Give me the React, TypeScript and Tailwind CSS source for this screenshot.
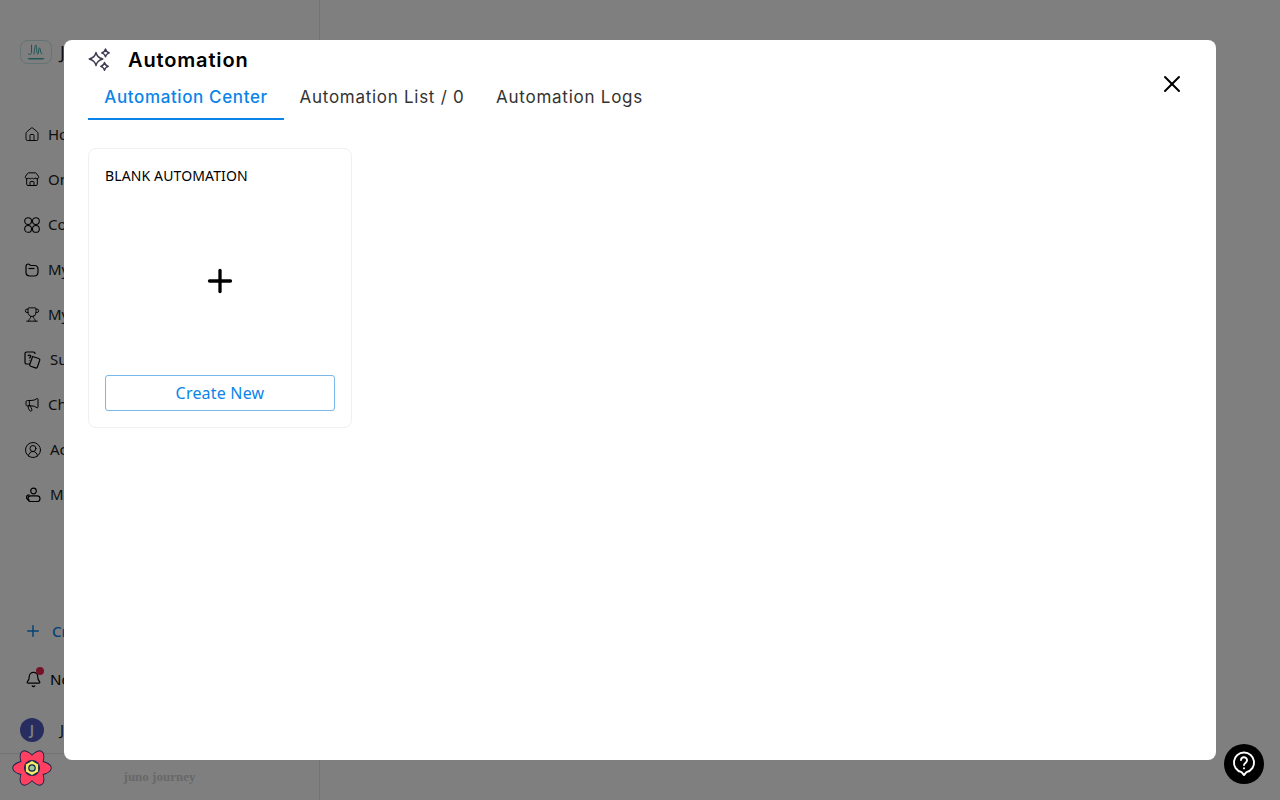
import { House, Store, Trophy, Megaphone, CircleUserRound, Plus, Bell, X } from "lucide-react";

function FourCircles() {
  return (
    <svg width="16" height="16" viewBox="0 0 16 16" fill="none" stroke="currentColor" strokeWidth="1.1">
      <circle cx="4.100" cy="4.100" r="3.400" />
      <circle cx="11.900" cy="4.100" r="3.400" />
      <circle cx="4.100" cy="11.900" r="3.400" />
      <circle cx="11.900" cy="11.900" r="3.400" />
    </svg>
  );
}

function FolderIcon() {
  return (
    <svg width="14" height="14" viewBox="0 0 14 14" fill="none" stroke="currentColor" strokeWidth="1.200" strokeLinejoin="round">
      <path d="M1 3.500C1 2 2 1 3.300 1c1.200 0 1.500 1.300 2.500 1.500h3.700C11.500 2.500 13 4 13 6.500v2.300C13 11.500 11.500 13 9.500 13H4.500C2.500 13 1 11.500 1 9.500v-6z" />
      <path d="M3.500 5.500h6" />
    </svg>
  );
}

function SurveyIcon() {
  return (
    <svg width="18" height="18" viewBox="0 0 18 18" fill="none" stroke="currentColor" strokeWidth="1.200" strokeLinejoin="round">
      <path d="M11 3V2.600A1.600 1.600 0 0 0 9.400 1H2.600A1.600 1.600 0 0 0 1 2.600v8.800A1.600 1.600 0 0 0 2.600 13H6" />
      <path d="M8.500 5.500l6.200 2a1.500 1.500 0 0 1 1 1.900l-2.300 6.600a1.500 1.500 0 0 1-1.900.9l-4.800-1.700a1.500 1.500 0 0 1-.9-1.900l2.400-6.600z" />
      <path d="M4 5c.4-1.200 2.600-1.200 2.800.2.100 1-1.300 1.200-1.300 2.300M5.500 9.500v.4" />
    </svg>
  );
}

function ManageIcon() {
  return (
    <svg width="16" height="16" viewBox="0 0 16 16" fill="none" stroke="currentColor" strokeWidth="1.200">
      <circle cx="8.500" cy="4" r="2.800" />
      <path d="M4.500 7.800C2.600 7.800 1.500 9 1.500 10.300S2.600 12.800 4.500 12.800" />
      <rect x="3" y="8.800" width="12" height="5.700" rx="2.850" />
    </svg>
  );
}

function Sparkles() {
  return (
    <svg width="24" height="24" viewBox="0 0 24 24" fill="none" stroke="#3f3d56" strokeWidth="1.400" strokeLinejoin="round">
      <path d="M8 4.500c.6 3.300 2.500 5.300 6.800 6.500C10.500 12.200 8.600 14.200 8 17.500 7.400 14.200 5.500 12.200 1.200 11 5.500 9.800 7.400 7.800 8 4.500z" />
      <path d="M17.500 1c.4 2.100 1.400 3.200 3.800 3.900-2.400.700-3.400 1.800-3.800 3.900-.4-2.100-1.400-3.200-3.800-3.900 2.400-.7 3.400-1.800 3.800-3.900z" />
      <path d="M16.500 14.500c.4 2.100 1.400 3.200 3.800 3.900-2.400.7-3.400 1.800-3.800 3.900-.4-2.100-1.400-3.200-3.800-3.900 2.400-.7 3.400-1.800 3.800-3.900z" />
    </svg>
  );
}

function Logo() {
  return (
    <svg width="32" height="24" viewBox="0 0 32 24" fill="none" strokeLinecap="round">
      <rect x="0.500" y="0.500" width="31" height="23" rx="7" stroke="#c6e4e4" />
      <path d="M11.500 5v7.500c0 2-2 2.500-3 1.500" stroke="#43adad" strokeWidth="1" />
      <path d="M14 14c.5-5 1-9 2-9s.3 9 1.700 9 .6-6 1.800-6 .5 6 2.500 6" stroke="#43adad" strokeWidth="1" />
      <rect x="8" y="18" width="16" height="1.600" rx="0.800" fill="#43adad" />
    </svg>
  );
}

function AtomLogo() {
  const angles = [0, 60, 120];
  return (
    <svg width="40" height="38" viewBox="-20 -19 40 38">
      {angles.map((a) => (
        <ellipse key={a} rx="18.800" ry="7.500" transform={`rotate(${a})`} fill="#14244a" stroke="#14244a" strokeWidth="1.800" />
      ))}
      {angles.map((a) => (
        <ellipse key={a} rx="18.800" ry="7.500" transform={`rotate(${a})`} fill="#ff4060" />
      ))}
      <circle r="8" fill="#14244a" />
      <polygon points="0,-7.500 6.500,-3.750 6.500,3.750 0,7.500 -6.500,3.750 -6.500,-3.750" fill="#f4ea6a" stroke="#14244a" strokeWidth="0.800" />
      <circle r="3.200" fill="#9ac9a0" stroke="#14244a" strokeWidth="1.200" />
    </svg>
  );
}

function HelpIcon() {
  return (
    <svg width="24" height="26" viewBox="0 0 24 26" fill="none" stroke="white" strokeWidth="1.900" strokeLinecap="round" strokeLinejoin="round">
      <path d="M12 1.500a10 10 0 0 1 2.500 19.700L12 24l-2.500-2.800A10 10 0 0 1 12 1.500z" />
      <path d="M9 9a3 3 0 0 1 6 .6c0 2.100-3 2.500-3 4.400" />
      <path d="M12 17.300v.1" />
    </svg>
  );
}

const navItems = [
  { label: "Home", icon: <House size={17} strokeWidth={1.4} />, width: "w-4" },
  { label: "Online Store", icon: <Store size={17} strokeWidth={1.5} />, width: "w-4" },
  { label: "Community", icon: <FourCircles />, width: "w-4" },
  { label: "My Programs", icon: <FolderIcon />, width: "w-4" },
  { label: "My Achievements", icon: <Trophy size={17} strokeWidth={1.4} />, width: "w-4" },
  { label: "Surveys", icon: <SurveyIcon />, width: "w-[18px]" },
  { label: "Channels", icon: <Megaphone size={17} strokeWidth={1.5} />, width: "w-4" },
  { label: "Account", icon: <CircleUserRound size={18} strokeWidth={1.3} />, width: "w-[18px]" },
  { label: "Manage", icon: <ManageIcon />, width: "w-[18px]" },
];

function Sidebar() {
  return (
    <aside className="flex h-screen w-[320px] flex-col border-r border-gray-200 bg-white font-['Noto_Sans',sans-serif] text-[15px] text-[#222]">
      <div className="flex h-[104px] items-center gap-2 pl-5">
        <Logo />
        <span className="text-lg">Juno Journey</span>
      </div>
      <nav className="flex flex-1 flex-col pt-[8px]">
        {navItems.map((item) => (
          <div key={item.label} className="flex h-[45px] items-center gap-2 pl-6 text-black">
            <span className={`flex justify-center ${item.width}`}>{item.icon}</span>
            <span className="text-[#222]">{item.label}</span>
          </div>
        ))}
      </nav>
      <div className="flex h-12 items-center gap-2.5 pl-6 font-medium text-[#0a84e8]">
        <Plus size={18} strokeWidth={2} />
        <span>Create</span>
      </div>
      <div className="flex h-12 items-center gap-2 pl-6 text-black">
        <span className="relative flex w-[18px] justify-center">
          <Bell size={17} strokeWidth={1.7} />
          <span className="absolute -right-0.5 -top-1 h-2 w-2 rounded-full bg-[#e8264f]" />
        </span>
        <span>Notifications</span>
      </div>
      <div className="flex h-[50px] items-center gap-4 pl-5 pt-[3px]">
        <span className="flex h-6 w-6 items-center justify-center rounded-full bg-[#4f5bbd] text-sm font-semibold text-white">J</span>
        <span>Juno</span>
      </div>
      <div className="flex h-[47px] items-center justify-center border-t border-gray-200 font-['Liberation_Serif',serif] text-[13px] font-bold text-[#d0d0d0]">
        juno journey
      </div>
    </aside>
  );
}

function AutomationModal() {
  return (
    <div className="fixed inset-0 flex items-center justify-center bg-black/50">
      <div className="relative h-[720px] w-[1152px] rounded-lg bg-white pl-6 font-['Inter',sans-serif]">
        <div className="flex h-10 items-center gap-4">
          <Sparkles />
          <h2 className="text-[20px] font-semibold tracking-[0.85px] text-black">Automation</h2>
        </div>
        <div className="flex text-[17px] font-medium tracking-[0.62px]">
          <button className="flex h-10 w-[196px] items-center justify-center border-b-2 border-[#0a84e8] pb-[3px] text-[#0a84e8]">
            Automation Center
          </button>
          <button className="flex h-10 w-[196px] items-center justify-center border-b-2 border-transparent pb-[3px] font-normal tracking-[0.72px] text-[#333]">
            Automation List / 0
          </button>
          <button className="flex h-10 w-[179px] items-center justify-center border-b-2 border-transparent pb-[3px] font-normal tracking-[0.75px] text-[#333]">
            Automation Logs
          </button>
        </div>
        <div className="mt-7 flex h-[280px] w-[264px] flex-col rounded-lg border border-[#f0f0f0] p-4 font-['Noto_Sans',sans-serif]">
          <div className="text-sm leading-[22px] tracking-[0.13px] text-black">BLANK AUTOMATION</div>
          <div className="flex flex-1 items-center justify-center">
            <Plus size={36} strokeWidth={2.2} className="text-black" />
          </div>
          <button className="h-9 w-full rounded-[3px] border border-[#7ab8ea] text-base tracking-[0.2px] text-[#0a84e8]">Create New</button>
        </div>
        <button className="absolute right-[30px] top-[30px] text-black">
          <X size={28} strokeWidth={1.7} />
        </button>
      </div>
    </div>
  );
}

export default function App() {
  return (
    <div className="relative h-screen w-full overflow-hidden bg-white">
      <Sidebar />
      <AutomationModal />
      <div className="fixed bottom-[13px] left-3">
        <AtomLogo />
      </div>
      <button className="fixed bottom-4 right-4 flex h-10 w-10 items-center justify-center rounded-full bg-black">
        <HelpIcon />
      </button>
    </div>
  );
}
